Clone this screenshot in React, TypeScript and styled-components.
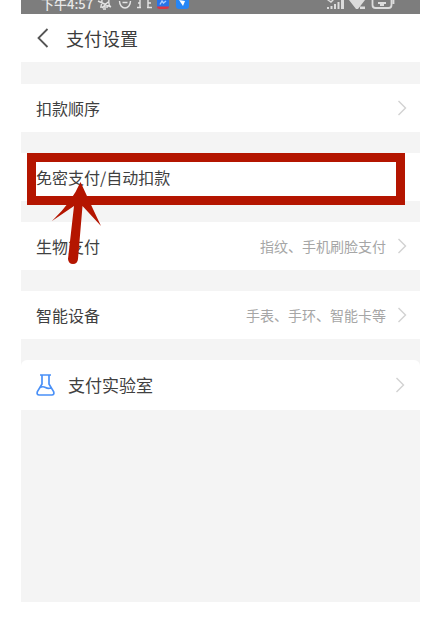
import React from "react";
import styled, { createGlobalStyle } from "styled-components";

const GlobalStyle = createGlobalStyle`
  * { box-sizing: border-box; }
  body {
    margin: 0;
    background: #fff;
    font-family: "Noto Sans CJK SC", "Noto Sans", sans-serif;
  }
`;

const Page = styled.main`
  padding: 0 19px 39px 21px;
`;

const Phone = styled.div`
  min-height: calc(100vh - 39px);
  background: #f4f4f4;
`;

const StatusBar = styled.div`
  display: flex;
  align-items: flex-end;
  justify-content: space-between;
  height: 14px;
  padding: 0 23px 4px 20px;
  overflow: hidden;
  background: #7d7d7d;
  color: #e8e8e8;
`;

const StatusGroup = styled.div`
  display: flex;
  align-items: flex-end;
  gap: 4px;
`;

const Clock = styled.span`
  font-size: 13px;
  line-height: 12px;
  font-weight: 500;
`;

const Header = styled.header`
  display: flex;
  align-items: center;
  gap: 16px;
  height: 48px;
  padding: 0 15px;
  background: #fff;
`;

const BackButton = styled.button`
  display: flex;
  padding: 0;
  border: 0;
  background: none;
  color: #555;
`;

const Title = styled.h1`
  margin: 0;
  font-size: 18px;
  line-height: 24px;
  font-weight: 400;
  color: #3c3c3c;
`;

const List = styled.nav`
  display: flex;
  flex-direction: column;
  gap: 21px;
  padding-top: 22px;
`;

const Item = styled.div`
  position: relative;
`;

const Row = styled.a<{ $lab?: boolean }>`
  display: flex;
  align-items: center;
  height: ${(p) => (p.$lab ? 50 : 48)}px;
  padding: 0 ${(p) => (p.$lab ? 15 : 13)}px 0 15px;
  background: #fff;
  color: #404040;
  text-decoration: none;
  border-radius: ${(p) => (p.$lab ? "6px 6px 0 0" : "0")};
`;

const Label = styled.span<{ $large?: boolean }>`
  flex: 1;
  font-size: ${(p) => (p.$large ? 17 : 16)}px;
  line-height: 24px;
`;

const LabIcon = styled.svg`
  margin-right: 13px;
`;

const Value = styled.span`
  margin-right: 11px;
  font-size: 14px;
  line-height: 20px;
  color: #a6a6a6;
`;

const Highlight = styled.div`
  position: absolute;
  inset: 0 15px -4px 6px;
  border: 9px solid #b41500;
  pointer-events: none;
  z-index: 1;
`;

const Pointer = styled.svg`
  position: absolute;
  top: 28px;
  left: 31px;
  pointer-events: none;
  z-index: 2;
`;

const Chevron = () => (
  <svg width="10" height="16" viewBox="0 0 10 16" fill="none" stroke="#d2d2d2" strokeWidth="1.4" aria-hidden="true">
    <path d="M1.5 1 8.5 8l-7 7" />
  </svg>
);

const Flask = () => (
  <LabIcon width="19" height="22" viewBox="0 0 19 22" fill="none" stroke="#4a90f7" strokeWidth="1.7" strokeLinejoin="round" aria-hidden="true">
    <path d="M4 1h11M6 1v9L1.4 17.6Q.4 21 3.2 21h12.600q2.800 0 1.800-3.400L13 10V1M4 13.500q3-1.500 5.500 0t5.500.500" />
  </LabIcon>
);

const NoticeIcons = () => (
  <svg width="93" height="10" viewBox="0 0 93 10" fill="none" stroke="#e4e4e4" strokeWidth="1.4" aria-hidden="true">
    <path d="M1 1l13 6M3 7h8M4 6q1-2 1-6M12 0q-1 5 2 7M6 9h3M11 2 5 8" />
    <path d="M22.500 1a5.500 7 0 1 0 11 0M25.500 2.500h5" />
    <path d="M43 0v8M51 0v8M40 7.500h4M50 7.500h5M41 3h2M51 3h3" />
    <path d="M60 0h12v6q0 3-3 3h-6q-3 0-3-3z" fill="#2874e8" stroke="none" />
    <path d="M60 6.500h12q0 2.500-3 2.500h-6q-3 0-3-2.500z" fill="#df3541" stroke="none" />
    <path d="M63 4.500 65 1l1.500 2L69 1" stroke="#a8ccff" />
    <path d="M79 0h13v6q0 3-3 3h-7q-3 0-3-3z" fill="#2686f5" stroke="none" />
    <path d="m82 0 4 6 2-5z" fill="#fff" stroke="none" />
  </svg>
);

const SystemIcons = () => (
  <svg width="71" height="10" viewBox="0 0 71 10" fill="#dcdcdc" aria-hidden="true">
    <path d="M1 7h2v2H1zM4.500 6h2v3h-2zM8 4h2v5H8zM11.500 2h2v7h-2zM15 0h3v9h-3zM1 0l4 3 3-3H6L5 1 3 0z" />
    <path d="M23 0h16l-7 9h-2zM34 6.500h5V9h-5z" />
    <path d="M46.500 0v5q0 3 3 3h13q3 0 3-3V0M67.500 0v4M52 3h8M54 5h4" fill="none" stroke="#dcdcdc" strokeWidth="1.800" />
  </svg>
);

interface Entry {
  label: string;
  value?: string;
  lab?: boolean;
  highlighted?: boolean;
}

const entries: Entry[] = [
  { label: "扣款顺序" },
  { label: "免密支付/自动扣款", highlighted: true },
  { label: "生物支付", value: "指纹、手机刷脸支付" },
  { label: "智能设备", value: "手表、手环、智能卡等" },
  { label: "支付实验室", lab: true },
];

export default function App() {
  return (
    <>
      <GlobalStyle />
      <Page>
        <Phone>
          <StatusBar>
            <StatusGroup>
              <Clock>下午4:57</Clock>
              <NoticeIcons />
            </StatusGroup>
            <SystemIcons />
          </StatusBar>
          <Header>
            <BackButton type="button" aria-label="返回">
              <svg width="14" height="20" viewBox="0 0 14 20" fill="none" stroke="currentColor" strokeWidth="1.800">
                <path d="M11.500 1 2.500 10l9 9" />
              </svg>
            </BackButton>
            <Title>支付设置</Title>
          </Header>
          <List>
            {entries.map((e) => (
              <Item key={e.label}>
                <Row href="#" $lab={e.lab}>
                  {e.lab && <Flask />}
                  <Label $large={e.lab}>{e.label}</Label>
                  {e.value && <Value>{e.value}</Value>}
                  {!e.highlighted && <Chevron />}
                </Row>
                {e.highlighted && (
                  <>
                    <Highlight />
                    <Pointer width="50" height="84" viewBox="0 0 50 84" fill="#b41500" aria-hidden="true">
                      <path d="M28.500 1 Q40 26 49 45 L30.500 25 26 78q-.5 5-5 5t-5-5L22 25 0 40Q20 21 28.500 1z" />
                    </Pointer>
                  </>
                )}
              </Item>
            ))}
          </List>
        </Phone>
      </Page>
    </>
  );
}
